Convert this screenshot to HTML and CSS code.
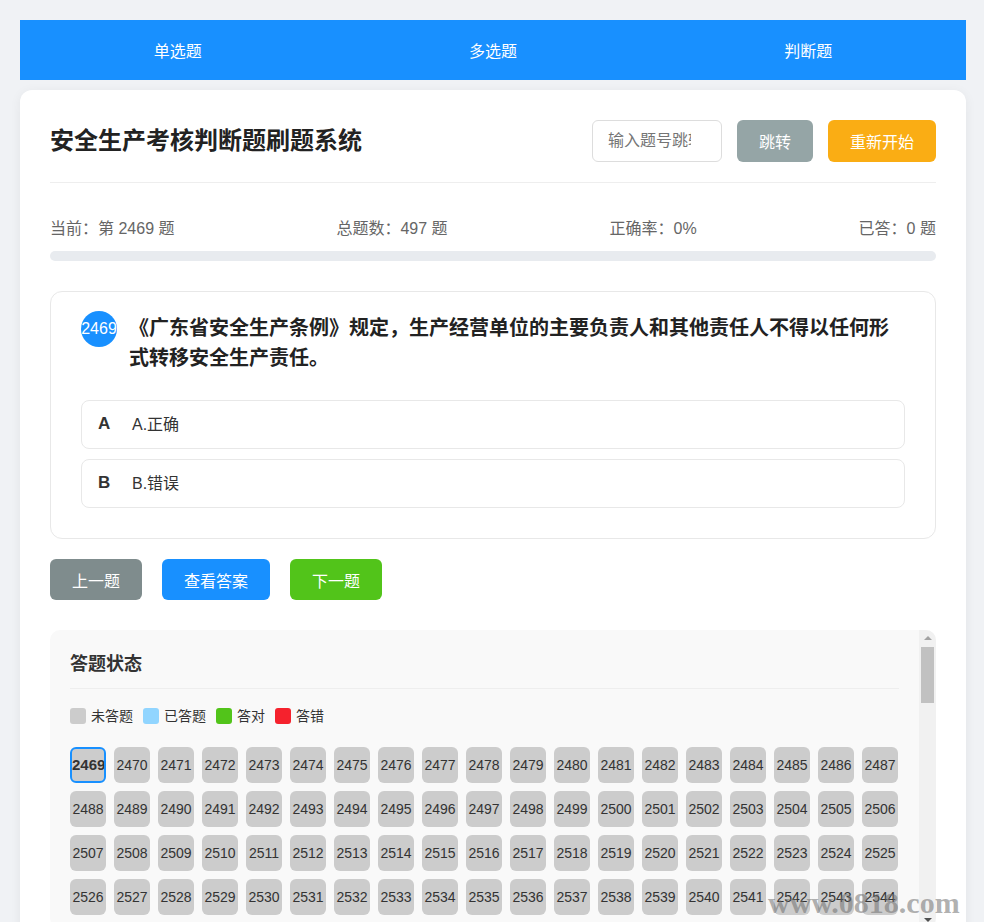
FILE: index.html
```html
<!DOCTYPE html>
<html lang="zh-CN">
  <head>
    <meta charset="UTF-8" />
    <meta name="viewport" content="width=device-width, initial-scale=1.0" />
    <title>安全生产考核判断题刷题系统</title>
    <link rel="stylesheet" href="styles.css">
  </head>
  <body>
    <nav class="tabs">
      <a class="tab">单选题</a>
      <a class="tab">多选题</a>
      <a class="tab">判断题</a>
    </nav>

    <main class="card">
      <header class="header">
        <h1 class="title">安全生产考核判断题刷题系统</h1>
        <div class="tools">
          <input class="jump-input" type="number" placeholder="输入题号跳转">
          <button class="btn btn-gray">跳转</button>
          <button class="btn btn-orange">重新开始</button>
        </div>
      </header>

      <div class="stats">
        <span>当前：第 2469 题</span>
        <span>总题数：497 题</span>
        <span>正确率：0%</span>
        <span>已答：0 题</span>
      </div>
      <div class="progress"><div class="progress-bar" style="width: 0%"></div></div>

      <section class="question">
        <div class="q-row">
          <div class="q-num">2469</div>
          <div class="q-text">《广东省安全生产条例》规定，生产经营单位的主要负责人和其他责任人不得以任何形式转移安全生产责任。</div>
        </div>
        <div class="option">
          <span class="opt-letter">A</span>
          <span class="opt-text">A.正确</span>
        </div>
        <div class="option">
          <span class="opt-letter">B</span>
          <span class="opt-text">B.错误</span>
        </div>
      </section>

      <div class="actions">
        <button class="btn btn-dark">上一题</button>
        <button class="btn btn-blue">查看答案</button>
        <button class="btn btn-green">下一题</button>
      </div>

      <section class="status-wrap">
        <div class="status" id="status">
          <h2 class="status-title">答题状态</h2>
          <div class="legend">
            <span class="legend-item"><i class="dot dot-none"></i>未答题</span>
            <span class="legend-item"><i class="dot dot-done"></i>已答题</span>
            <span class="legend-item"><i class="dot dot-right"></i>答对</span>
            <span class="legend-item"><i class="dot dot-wrong"></i>答错</span>
          </div>
          <div class="grid" id="grid"></div>
        </div>
        <!-- scrollbar drawn by hand, the native one is hidden -->
        <div class="scrollbar">
          <span class="sb-up"></span>
          <span class="sb-thumb" id="thumb"></span>
          <span class="sb-down"></span>
        </div>
      </section>
    </main>

    <div class="watermark">www.0818.com</div>

    <script>
      // build the question number grid
      var grid = document.getElementById("grid"),
        start = 2469,
        total = 497;
      for (var i = 0; i < total; i++) {
        var cell = document.createElement("div");
        cell.className = "cell" + (i === 0 ? " current" : "");
        cell.textContent = start + i;
        grid.appendChild(cell);
      }

      // keep the fake thumb in step with the list
      var box = document.getElementById("status"),
        thumb = document.getElementById("thumb");
      function syncThumb() {
        var track = box.clientHeight - 34,
          size = Math.max(20, Math.round(track * box.clientHeight / box.scrollHeight) - 4),
          top = (track - size) * box.scrollTop / (box.scrollHeight - box.clientHeight || 1);
        thumb.style.height = size + "px";
        thumb.style.top = 17 + top + "px";
      }
      box.addEventListener("scroll", syncThumb);
      syncThumb();
    </script>
  </body>
</html>
```

FILE: styles.css
```css
body {
  margin: 0;
  padding: 20px 18px 20px 20px;
  background-color: #f0f2f5;
  font-family: "Liberation Sans", "Noto Sans CJK SC", sans-serif;
  color: #333;
}

.tabs {
  display: flex;
  height: 60px;
  background: #1890ff;
}

.tab {
  flex: 1;
  display: flex;
  align-items: center;
  justify-content: center;
  color: #fff;
  font-size: 16px;
}

.card {
  margin-top: 10px;
  background: #fff;
  border-radius: 12px;
  padding: 30px;
  box-shadow: 0 2px 12px rgba(0, 0, 0, 0.06);
}

.header {
  display: flex;
  justify-content: space-between;
  align-items: center;
  padding-bottom: 20px;
  border-bottom: 1px solid #eee;
}

.title {
  margin: 0;
  font-size: 24px;
  line-height: 34px;
  color: #222;
}

.tools {
  display: flex;
  gap: 15px;
}

.jump-input {
  box-sizing: border-box;
  width: 130px;
  height: 42px;
  padding: 0 15px;
  border: 1px solid #ddd;
  border-radius: 6px;
  font-family: inherit;
  font-size: 16px;
  color: #333;
  outline: none;
}

.jump-input::placeholder {
  color: #757575;
}

.btn {
  border: none;
  border-radius: 6px;
  padding: 0 22px;
  height: 42px;
  font-family: inherit;
  font-size: 16px;
  color: #fff;
  cursor: pointer;
}

.btn-gray {
  background: #95a5a6;
}

.btn-orange {
  background: #faad14;
}

.btn-dark {
  background: #7f8c8d;
}

.btn-blue {
  background: #1890ff;
}

.btn-green {
  background: #52c41a;
}

.stats {
  display: flex;
  justify-content: space-between;
  margin-top: 34px;
  font-size: 16px;
  line-height: 24px;
  color: #666;
}

.progress {
  margin-top: 10px;
  height: 10px;
  border-radius: 5px;
  background: #e8ebef;
  overflow: hidden;
}

.progress-bar {
  height: 100%;
  background: #1890ff;
}

.question {
  margin-top: 30px;
  border: 1px solid #e8e8e8;
  border-radius: 12px;
  padding: 19px 30px 30px;
}

.q-row {
  display: flex;
  align-items: flex-start;
  gap: 12px;
  margin-bottom: 27px;
}

.q-num {
  flex: none;
  width: 36px;
  height: 36px;
  border-radius: 50%;
  background: #1890ff;
  color: #fff;
  font-size: 16px;
  line-height: 36px;
  text-align: center;
  overflow: hidden;
  white-space: nowrap;
}

.q-text {
  padding-top: 2px;
  font-size: 20px;
  line-height: 30px;
  font-weight: bold;
  color: #222;
}

.option {
  display: flex;
  align-items: center;
  margin-bottom: 10px;
  padding: 12px 16px;
  border: 1px solid #e8e8e8;
  border-radius: 8px;
  font-size: 16px;
  line-height: 23px;
}

.option:last-child {
  margin-bottom: 0;
}

.opt-letter {
  width: 24px;
  margin-right: 10px;
  margin-top: -3px;
  font-weight: bold;
  font-size: 17px;
  color: #333;
}

.actions {
  display: flex;
  gap: 20px;
  margin-top: 20px;
}

.actions .btn {
  height: 41px;
}

.status-wrap {
  position: relative;
  margin-top: 30px;
  height: 298px;
  background: #f9f9f9;
  border-radius: 10px;
  overflow: hidden;
}

.status {
  box-sizing: border-box;
  height: 100%;
  padding: 20px 37px 20px 20px;
  overflow-y: auto;
  scrollbar-width: none;
}

.status::-webkit-scrollbar {
  display: none;
}

.scrollbar {
  position: absolute;
  top: 0;
  right: 0;
  bottom: 0;
  width: 17px;
  background: #f1f1f1;
}

.sb-up,
.sb-down {
  position: absolute;
  left: 5px;
  width: 0;
  height: 0;
  border-left: 4px solid transparent;
  border-right: 4px solid transparent;
}

.sb-up {
  top: 6px;
  border-bottom: 4px solid #a3a3a3;
}

.sb-down {
  bottom: 6px;
  border-top: 4px solid #505050;
}

.sb-thumb {
  position: absolute;
  left: 2px;
  right: 2px;
  top: 17px;
  height: 62px;
  background: #c1c1c1;
}

.status-title {
  margin: 0;
  padding-bottom: 10px;
  border-bottom: 1px solid #eee;
  font-size: 18px;
  line-height: 28px;
  color: #333;
}

.legend {
  display: flex;
  gap: 10px;
  margin: 17px 0 21px;
  font-size: 14px;
  line-height: 20px;
}

.legend-item {
  display: flex;
  align-items: center;
  gap: 5px;
}

.dot {
  width: 16px;
  height: 16px;
  border-radius: 3px;
}

.dot-none {
  background: #ccc;
}

.dot-done {
  background: #91d5ff;
}

.dot-right {
  background: #52c41a;
}

.dot-wrong {
  background: #f5222d;
}

.grid {
  display: flex;
  flex-wrap: wrap;
  gap: 8px;
}

.cell {
  box-sizing: border-box;
  width: 36px;
  height: 36px;
  border-radius: 6px;
  background: #ccc;
  color: #333;
  font-size: 14px;
  line-height: 36px;
  text-align: center;
  white-space: nowrap;
}

.cell.current {
  border: 2px solid #1890ff;
  line-height: 32px;
  font-weight: bold;
  font-size: 15px;
  overflow: hidden;
}

.watermark {
  position: absolute;
  left: 768px;
  top: 886px;
  font-family: "Liberation Serif", serif;
  font-weight: bold;
  font-size: 30px;
  line-height: 34px;
  color: rgba(110, 110, 110, 0.55);
  pointer-events: none;
}
```
